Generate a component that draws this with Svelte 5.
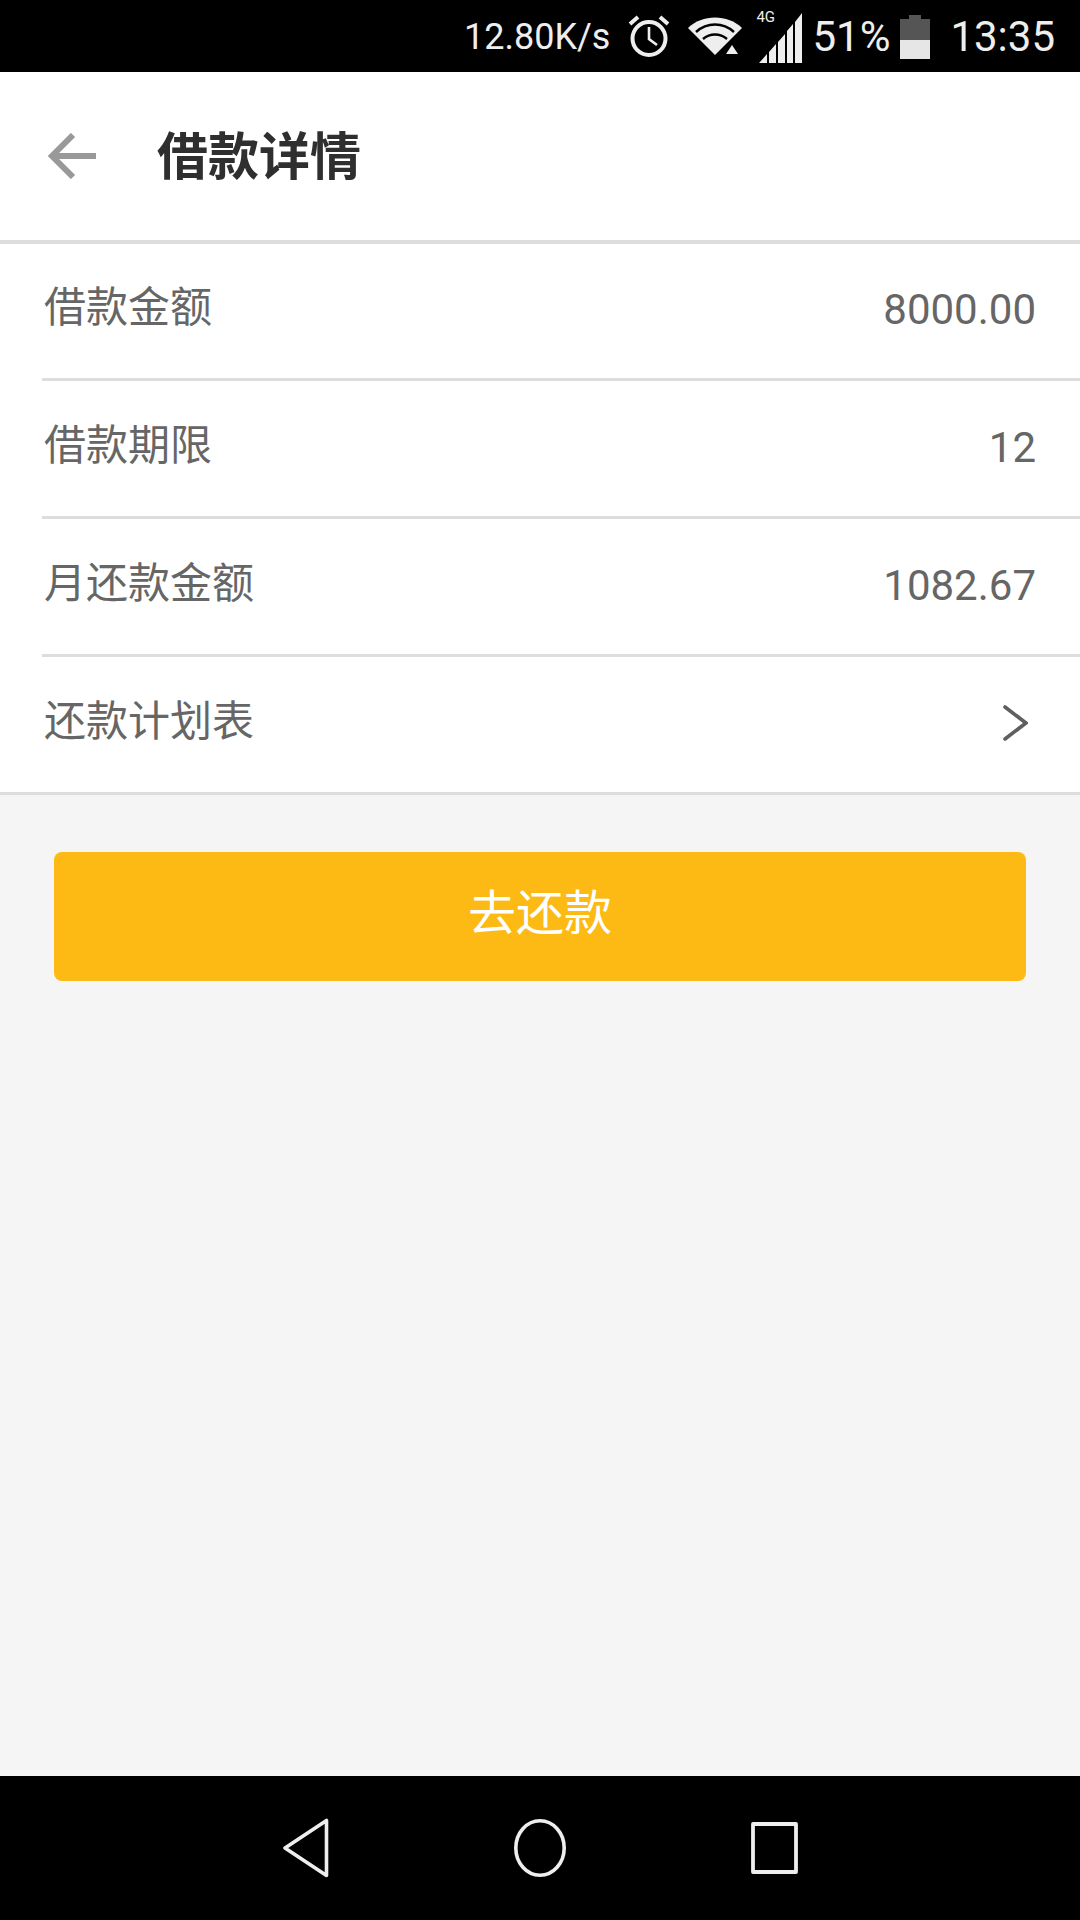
<script>
  const rows = [
    { label: '借款金额', value: '8000.00' },
    { label: '借款期限', value: '12' },
    { label: '月还款金额', value: '1082.67' }
  ];
</script>

<div class="page">
  <div class="status">
    <span class="speed">12.80K/s</span>
    <svg class="alarm" width="46" height="46" viewBox="0 0 46 46" fill="none" stroke="#eee">
      <circle cx="23" cy="25.5" r="16.5" stroke-width="4" />
      <path d="M23 14v12l8 6" stroke-width="2.6" />
      <path d="M4 11l8-7M42 11l-8-7" stroke-width="4" />
    </svg>
    <svg class="wifi" width="54" height="38" viewBox="0 0 54 38">
      <path d="M0 11C14-3 40-3 54 11L27 38Z" fill="#eee" />
      <path d="M8 15C19 5 35 5 46 15" fill="none" stroke="#000" stroke-width="2.4" />
      <path d="M15 22C22 16 32 16 39 22" fill="none" stroke="#000" stroke-width="2.4" />
      <path d="M33 38L44 23L54 38Z" fill="#000" />
      <path d="M38 37L44 28L50 37Z" fill="#eee" />
    </svg>
    <div class="signal">
      <span class="g4">4G</span>
      <svg width="44" height="52" viewBox="0 0 44 52" fill="#eee">
        <path d="M0 52L8 43V52Z" />
        <path d="M10 41L17 33V52H10Z" />
        <path d="M19 31L26 23V52H19Z" />
        <path d="M28 20L34 13V52H28Z" />
        <path d="M36 11L43 2V52H36Z" />
      </svg>
    </div>
    <span class="pct">51%</span>
    <svg class="battery" width="30" height="44" viewBox="0 0 30 44">
      <path d="M9 0H21V4H30V25H0V4H9Z" fill="#555" />
      <rect y="25" width="30" height="19" fill="#e6e6e6" />
    </svg>
    <span class="time">13:35</span>
  </div>

  <header class="bar">
    <svg class="back" width="49" height="46" viewBox="0 0 49 46" fill="none" stroke="#999" stroke-width="6">
      <path d="M49 23H5M26 2L5 23L26 44" />
    </svg>
    <h1>借款详情</h1>
  </header>

  <ul class="list">
    {#each rows as row}
      <li class="row">
        <span class="label">{row.label}</span>
        <span class="value">{row.value}</span>
      </li>
    {/each}
    <li class="row last">
      <span class="label">还款计划表</span>
      <svg class="chev" width="25" height="36" viewBox="0 0 25 36" fill="none" stroke="#5f5f5f" stroke-width="3.6" stroke-linecap="round">
        <path d="M2 2L23 18L2 34" />
      </svg>
    </li>
  </ul>

  <main class="body">
    <button class="pay">去还款</button>
  </main>

  <nav class="nav">
    <svg width="46" height="60" viewBox="0 0 46 60" fill="none" stroke="#eee" stroke-width="3.6" stroke-linejoin="round">
      <path d="M43.5 2.5V57.5L2 30Z" />
    </svg>
    <svg width="52" height="58" viewBox="0 0 52 58" fill="none" stroke="#eee" stroke-width="3.6">
      <ellipse cx="26" cy="29" rx="24.2" ry="27.2" />
    </svg>
    <svg width="47" height="52" viewBox="0 0 47 52" fill="none" stroke="#eee" stroke-width="3.8" stroke-linejoin="round">
      <rect x="2" y="2" width="43" height="48" />
    </svg>
  </nav>
</div>

<style>
  :global(body) {
    margin: 0;
  }
  .page {
    width: 1080px;
    height: 1920px;
    display: flex;
    flex-direction: column;
    background: #f5f5f5;
    font-family: Roboto, 'Noto Sans CJK SC', sans-serif;
  }
  .status {
    height: 72px;
    flex: none;
    background: #000;
    color: #eee;
    display: flex;
    align-items: center;
    justify-content: flex-end;
    padding-right: 25px;
    box-sizing: border-box;
  }
  .speed {
    font-size: 36px;
    margin-top: 2px;
  }
  .alarm {
    margin-left: 16px;
  }
  .wifi {
    margin-left: 16px;
  }
  .signal {
    position: relative;
    display: flex;
    margin-left: 17px;
    margin-top: 2px;
  }
  .g4 {
    position: absolute;
    left: -3px;
    top: -3px;
    font-size: 15px;
    line-height: 18px;
  }
  .pct {
    font-size: 42px;
    margin-left: 9px;
  }
  .battery {
    margin-left: 10px;
    margin-top: 2px;
  }
  .time {
    font-size: 42px;
    margin-left: 20px;
  }
  .bar {
    height: 168px;
    flex: none;
    box-sizing: border-box;
    background: #fff;
    display: flex;
    align-items: center;
    padding-left: 47px;
  }
  h1 {
    margin: 2px 0 0 61px;
    font-size: 51px;
    font-weight: 700;
    line-height: 1;
    color: #2f2f2f;
  }
  .list {
    list-style: none;
    margin: 0;
    padding: 0;
    flex: none;
    background: #fff;
    border-top: 4px solid #ddd;
  }
  .row {
    height: 129px;
    margin-left: 42px;
    padding: 0 44px 6px 2px;
    border-bottom: 3px solid #ddd;
    display: flex;
    align-items: center;
    justify-content: space-between;
    color: #666;
    font-size: 42px;
  }
  .row:first-child {
    height: 128px;
  }
  .last {
    margin-left: 0;
    padding-left: 44px;
    padding-right: 52px;
  }
  .label {
    line-height: 1;
  }
  .value {
    line-height: 1;
    margin-top: 4px;
  }
  .chev {
    margin-top: 2px;
  }
  .body {
    flex: 1;
    padding: 57px 54px 0;
  }
  .pay {
    display: block;
    width: 100%;
    height: 129px;
    border: 0;
    border-radius: 8px;
    background: #fdba15;
    color: #fff;
    font-family: inherit;
    font-size: 48px;
    padding: 0 0 15px;
  }
  .nav {
    height: 144px;
    flex: none;
    background: #000;
    display: flex;
    align-items: center;
    padding: 0 282px 0 283px;
    justify-content: space-between;
  }
</style>
